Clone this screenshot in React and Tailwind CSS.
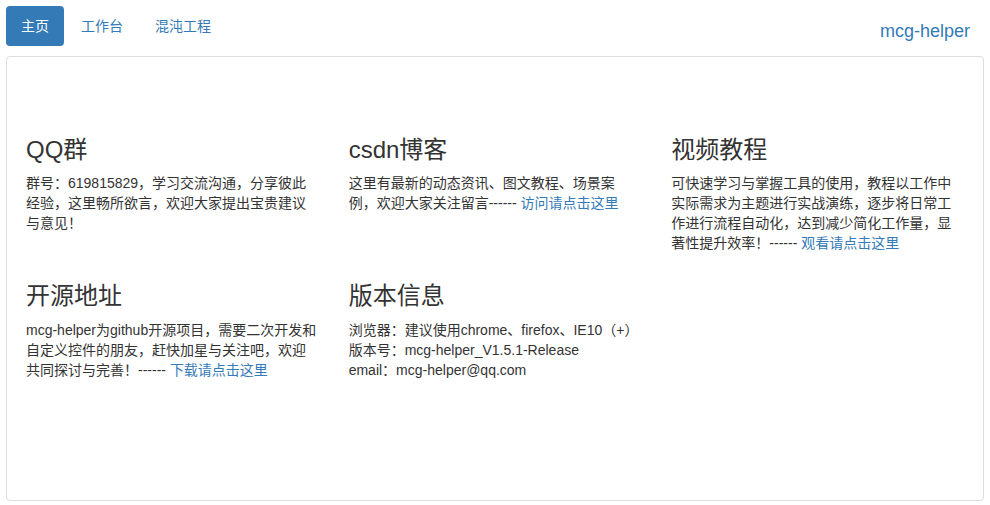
export default function App() {
  const font = { fontFamily: '"Liberation Sans", "Noto Sans CJK SC", sans-serif' };
  const link = "text-[#337ab7]";
  const h = "mt-[20px] mb-[10px] text-[24px] leading-[26.4px] font-normal";
  return (
    <div className="bg-white min-h-[505px] px-[6px] pt-[6px] text-[14px] leading-[20px] text-[#333]" style={font}>
      <div className="flex items-start justify-between h-[50px]">
        <ul className="flex">
          <li className="px-[15px] py-[10px] rounded-[4px] bg-[#337ab7] text-white">主页</li>
          <li className="ml-[2px] px-[15px] py-[10px] text-[#337ab7]">工作台</li>
          <li className="ml-[2px] px-[15px] py-[10px] text-[#337ab7]">混沌工程</li>
        </ul>
        <div className="pl-[15px] pr-[14px] py-[15px] text-[18px] leading-[20px] text-[#337ab7]">mcg-helper</div>
      </div>
      <div className="h-[445px] border border-[#ddd] rounded-[4px] px-[4px] pt-[60px]">
        <div className="grid grid-cols-3">
          <div className="px-[15px]">
            <h3 className={h}>QQ群</h3>
            <p className="mb-[10px]">群号：619815829，学习交流沟通，分享彼此经验，这里畅所欲言，欢迎大家提出宝贵建议与意见！</p>
          </div>
          <div className="px-[15px]">
            <h3 className={h}>csdn博客</h3>
            <p className="mb-[10px]">这里有最新的动态资讯、图文教程、场景案例，欢迎大家关注留言------ <span className={link}>访问请点击这里</span></p>
          </div>
          <div className="px-[15px]">
            <h3 className={h}>视频教程</h3>
            <p className="mb-[10px]">可快速学习与掌握工具的使用，教程以工作中实际需求为主题进行实战演练，逐步将日常工作进行流程自动化，达到减少简化工作量，显著性提升效率！------ <span className={link}>观看请点击这里</span></p>
          </div>
          <div className="px-[15px]">
            <h3 className={h}>开源地址</h3>
            <p className="mb-[10px]">mcg-helper为github开源项目，需要二次开发和自定义控件的朋友，赶快加星与关注吧，欢迎共同探讨与完善！------ <span className={link}>下载请点击这里</span></p>
          </div>
          <div className="px-[15px]">
            <h3 className={h}>版本信息</h3>
            <p>浏览器：建议使用chrome、firefox、IE10（+）</p>
            <p>版本号：mcg-helper_V1.5.1-Release</p>
            <p>email：mcg-helper@qq.com</p>
          </div>
          <div />
        </div>
      </div>
    </div>
  );
}
